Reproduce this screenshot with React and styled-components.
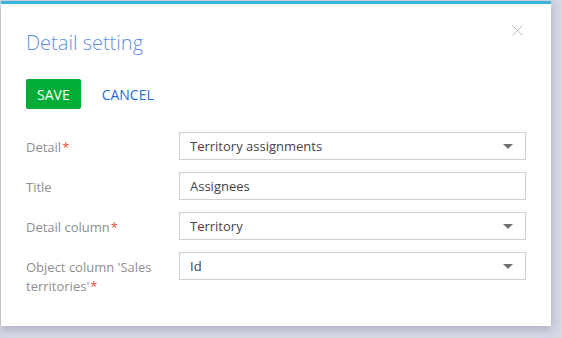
import React from 'react';
import styled, {createGlobalStyle} from 'styled-components';

const GlobalStyle = createGlobalStyle`
  html, body {
    margin: 0;
    padding: 0;
    background: #d5d9e4;
    font-family: "Open Sans", "Noto Sans", sans-serif;
  }
`;

const Page = styled.div`
  width: 562px;
  height: 338px;
  overflow: hidden;
`;

const Dialog = styled.div`
  margin: 1px 0 0 1px;
  width: 550px;
  height: 325px;
  background: #fff;
  border-top: 3px solid #3db4dc;
  box-shadow: 0 3px 10px rgba(60, 70, 100, 0.3);
  padding: 0 25px 0 25px;
  box-sizing: border-box;
`;

const Header = styled.div`
  display: flex;
  justify-content: space-between;
  align-items: flex-start;
  padding-top: 25px;
`;

const Title = styled.h1`
  margin: 0;
  font-size: 20px;
  line-height: 28px;
  font-weight: 300;
  color: #5f8fe3;
`;

const Close = styled.button`
  border: 0;
  background: none;
  padding: 0;
  margin: -4px 3px 0 0;
  width: 11px;
  height: 11px;
  cursor: pointer;
  display: flex;
`;

const Toolbar = styled.div`
  display: flex;
  align-items: center;
  gap: 21px;
  margin-top: 22px;
`;

const Button = styled.button`
  height: 30px;
  padding: 0 ${p => (p.primary ? '11px' : '0')};
  border: 0;
  border-radius: 2px;
  font-family: inherit;
  font-size: 14px;
  text-transform: uppercase;
  cursor: pointer;
  background: ${p => (p.primary ? '#00ad37' : 'transparent')};
  color: ${p => (p.primary ? '#fff' : '#2a6ad6')};
`;

const Form = styled.div`
  display: flex;
  flex-direction: column;
  gap: 12px;
  margin-top: 23px;
`;

const Row = styled.div`
  display: grid;
  grid-template-columns: 153px 347px;
  align-items: start;
`;

const Label = styled.label`
  font-size: 13px;
  line-height: 19px;
  padding-top: 6px;
  color: #8f8f8f;

  &::after {
    content: ${p => (p.required ? '"*"' : 'none')};
    color: #ec4a38;
    margin-left: 1px;
  }
`;

const Field = styled.div`
  height: 28px;
  box-sizing: border-box;
  border: 1px solid #cfcfcf;
  display: flex;
  align-items: center;
  justify-content: space-between;
  padding: 0 12px 0 10px;
  font-size: 13px;
  color: #444;
`;

const Arrow = styled.span`
  width: 0;
  height: 0;
  border-left: 5px solid transparent;
  border-right: 5px solid transparent;
  border-top: 5px solid #707070;
`;

const rows = [
  {label: 'Detail', required: true, value: 'Territory assignments', lookup: true},
  {label: 'Title', value: 'Assignees'},
  {label: 'Detail column', required: true, value: 'Territory', lookup: true},
  {label: "Object column 'Sales territories'", required: true, value: 'Id', lookup: true},
];

const App = () => {
  return (
    <Page>
      <GlobalStyle />
      <Dialog>
        <Header>
          <Title>Detail setting</Title>
          <Close aria-label="Close">
            <svg width="11" height="11" viewBox="0 0 11 11">
              <path d="M0.5 0.5 L10.5 10.5 M10.5 0.5 L0.5 10.5" stroke="#bdbdbd" strokeWidth="1" />
            </svg>
          </Close>
        </Header>
        <Toolbar>
          <Button primary>Save</Button>
          <Button>Cancel</Button>
        </Toolbar>
        <Form>
          {rows.map(r => (
            <Row key={r.label}>
              <Label required={r.required}>{r.label}</Label>
              <Field>
                <span>{r.value}</span>
                {r.lookup && <Arrow />}
              </Field>
            </Row>
          ))}
        </Form>
      </Dialog>
    </Page>
  );
};

export default App;
